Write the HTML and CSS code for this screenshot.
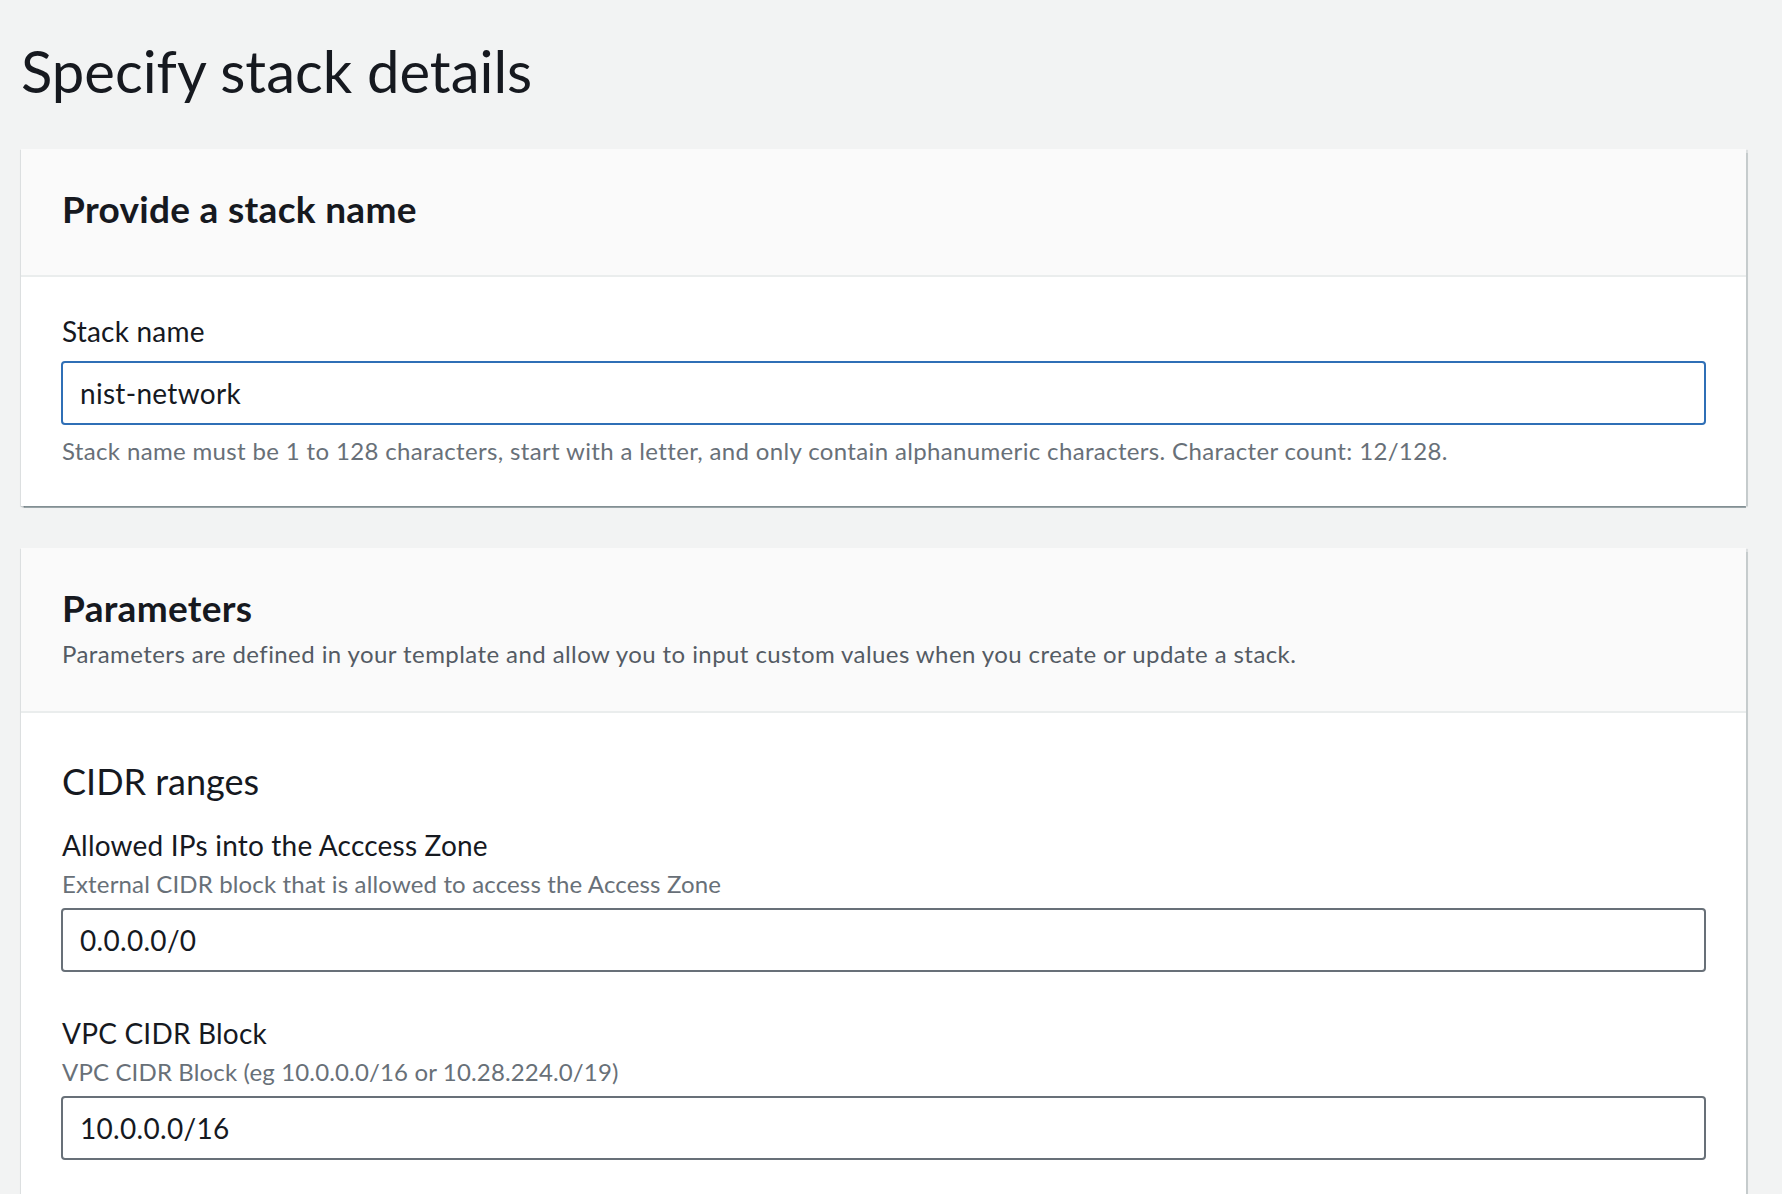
FILE: index.html
```html
<!DOCTYPE html>
<html lang="en">
<head>
<meta charset="utf-8">
<title>Specify stack details</title>
<link rel="stylesheet" href="styles.css">
</head>
<body>
<main class="page">
  <h1 class="page-title">Specify stack details</h1>

  <section class="card">
    <header class="card-header">
      <h2 class="card-title">Provide a stack name</h2>
    </header>
    <div class="card-body">
      <div class="field">
        <label class="field-label" for="stack-name">Stack name</label>
        <input class="text-input is-focused" id="stack-name" type="text" value="nist-network">
        <p class="constraint">Stack name must be 1 to 128 characters, start with a letter, and only contain alphanumeric characters. Character count: 12/128.</p>
      </div>
    </div>
  </section>

  <section class="card">
    <header class="card-header">
      <h2 class="card-title">Parameters</h2>
      <p class="card-description">Parameters are defined in your template and allow you to input custom values when you create or update a stack.</p>
    </header>
    <div class="card-body">
      <h3 class="group-title">CIDR ranges</h3>
      <div class="field">
        <label class="field-label" for="allowed-ips">Allowed IPs into the Acccess Zone</label>
        <p class="field-description">External CIDR block that is allowed to access the Access Zone</p>
        <input class="text-input" id="allowed-ips" type="text" value="0.0.0.0/0">
      </div>
      <div class="field">
        <label class="field-label" for="vpc-cidr">VPC CIDR Block</label>
        <p class="field-description">VPC CIDR Block (eg 10.0.0.0/16 or 10.28.224.0/19)</p>
        <input class="text-input" id="vpc-cidr" type="text" value="10.0.0.0/16">
      </div>
    </div>
  </section>
</main>
</body>
</html>
```

FILE: styles.css
```css
* { box-sizing: border-box; }

html, body {
  margin: 0;
  padding: 0;
  background: #f2f3f3;
  color: #16191f;
  font-family: "Lato", "Open Sans", "Liberation Sans", sans-serif;
}

.page {
  padding: 39px 36px 0 21px;
}

.page-title {
  margin: 0 0 46px 0;
  font-size: 58px;
  line-height: 64px;
  font-weight: 400;
  color: #16191f;
}

.card {
  background: #ffffff;
  margin-bottom: 42px;
  box-shadow: 0 2px 1px -0.5px rgba(0, 28, 36, 0.35),
              1.5px 1px 1px 0 rgba(0, 28, 36, 0.18),
              -1.5px 1px 1px 0 rgba(0, 28, 36, 0.18);
}

.card-header {
  background: #fafafa;
  padding: 36px 40px 42px 41px;
  border-bottom: 2px solid #eaeded;
}

.card-title {
  margin: 0;
  font-size: 37px;
  line-height: 48px;
  font-weight: 700;
  letter-spacing: 0.3px;
  color: #16191f;
}

.card-description {
  margin: 6px 0 -1px;
  font-size: 24px;
  line-height: 32px;
  letter-spacing: 0.42px;
  color: #545b64;
}

.card-body {
  padding: 34px 40px 39px 40px;
}

.group-title {
  margin: 12px 0 22px 1px;
  font-size: 36px;
  line-height: 44px;
  font-weight: 400;
  color: #16191f;
}

.field + .field {
  margin-top: 41px;
}

.field-label {
  display: block;
  padding-left: 1px;
  font-size: 28px;
  line-height: 40px;
  letter-spacing: 0.2px;
  color: #16191f;
}

.field-description {
  margin: 3px 0 0;
  padding-left: 1px;
  font-size: 24px;
  line-height: 32px;
  letter-spacing: 0.15px;
  color: #687078;
}

.text-input {
  display: block;
  width: 100%;
  height: 64px;
  margin-top: 8px;
  padding: 0 17px;
  border: 2px solid #687078;
  border-radius: 4px;
  background: #ffffff;
  font-family: inherit;
  font-size: 28px;
  letter-spacing: 0.3px;
  color: #16191f;
  outline: none;
}

.field-label + .text-input {
  margin-top: 10px;
}

.text-input.is-focused {
  border-color: #2f6fb6;
}

.constraint {
  margin: 10px 0 0;
  padding-left: 1px;
  font-size: 24px;
  line-height: 32px;
  letter-spacing: 0.35px;
  color: #687078;
}
```
